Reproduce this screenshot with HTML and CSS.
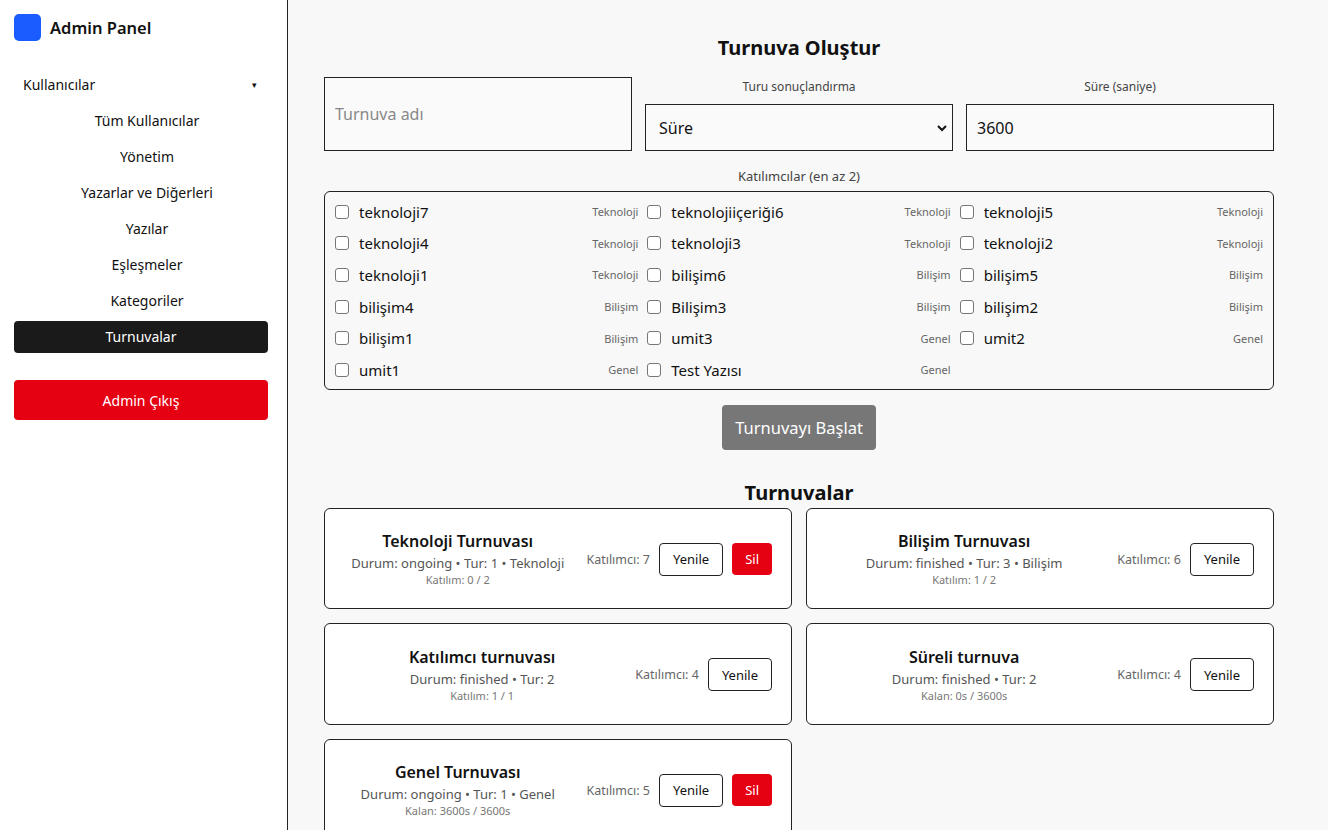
FILE: index.html
```html
<!doctype html>
<html lang="tr">
<head>
    <meta charset="utf-8">
    <meta name="viewport" content="width=device-width, initial-scale=1">
    <title>Admin Panel - Turnuvalar</title>
    <link rel="stylesheet" href="styles.css">
</head>
<body>
<div class="layout">
    <aside class="sidebar">
        <div class="brand">
            <span class="brand-logo"></span>
            <span class="brand-name">Admin Panel</span>
        </div>
        <nav class="nav">
            <div class="nav-group">Kullanıcılar <span class="caret">▾</span></div>
            <a class="nav-sub">Tüm Kullanıcılar</a>
            <a class="nav-sub">Yönetim</a>
            <a class="nav-sub">Yazarlar ve Diğerleri</a>
            <a class="nav-sub">Yazılar</a>
            <a class="nav-sub">Eşleşmeler</a>
            <a class="nav-sub">Kategoriler</a>
            <a class="nav-sub active">Turnuvalar</a>
        </nav>
        <button class="logout">Admin Çıkış</button>
    </aside>

    <main class="main">
        <h2 class="title">Turnuva Oluştur</h2>
        <div class="form-row">
            <div class="field field-name">
                <input type="text" placeholder="Turnuva adı">
            </div>
            <div class="field">
                <label>Turu sonuçlandırma</label>
                <div class="select-wrap">
                    <select>
                        <option>Süre</option>
                        <option>Katılım</option>
                    </select>
                    <svg class="chevron" width="10" height="7" viewBox="0 0 10 7"><polyline points="1,1 5,5 9,1" fill="none" stroke="#111" stroke-width="2"/></svg>
                </div>
            </div>
            <div class="field">
                <label>Süre (saniye)</label>
                <input type="text" value="3600">
            </div>
        </div>

        <div class="section-label">Katılımcılar (en az 2)</div>
        <div class="participants" id="participants"></div>

        <div class="start-row">
            <button class="start">Turnuvayı Başlat</button>
        </div>

        <h2 class="title title-list">Turnuvalar</h2>
        <div class="cards" id="cards"></div>
    </main>
</div>

<script>
    const participants = [
        ["teknoloji7", "Teknoloji"], ["teknolojiiçeriği6", "Teknoloji"], ["teknoloji5", "Teknoloji"],
        ["teknoloji4", "Teknoloji"], ["teknoloji3", "Teknoloji"], ["teknoloji2", "Teknoloji"],
        ["teknoloji1", "Teknoloji"], ["bilişim6", "Bilişim"], ["bilişim5", "Bilişim"],
        ["bilişim4", "Bilişim"], ["Bilişim3", "Bilişim"], ["bilişim2", "Bilişim"],
        ["bilişim1", "Bilişim"], ["umit3", "Genel"], ["umit2", "Genel"],
        ["umit1", "Genel"], ["Test Yazısı", "Genel"],
    ]

    const tournaments = [
        {name: "Teknoloji Turnuvası", meta: "Durum: ongoing • Tur: 1 • Teknoloji", sub: "Katılım: 0 / 2", count: 7, del: true},
        {name: "Bilişim Turnuvası", meta: "Durum: finished • Tur: 3 • Bilişim", sub: "Katılım: 1 / 2", count: 6, del: false},
        {name: "Katılımcı turnuvası", meta: "Durum: finished • Tur: 2", sub: "Katılım: 1 / 1", count: 4, del: false},
        {name: "Süreli turnuva", meta: "Durum: finished • Tur: 2", sub: "Kalan: 0s / 3600s", count: 4, del: false},
        {name: "Genel Turnuvası", meta: "Durum: ongoing • Tur: 1 • Genel", sub: "Kalan: 3600s / 3600s", count: 5, del: true},
    ]

    let list = document.getElementById("participants")
    for (let [name, cat] of participants) {
        let row = document.createElement("label")
        row.className = "participant"
        row.innerHTML = '<input type="checkbox"><span class="p-name">' + name + '</span><span class="p-cat">' + cat + '</span>'
        list.appendChild(row)
    }

    let cards = document.getElementById("cards")
    for (let t of tournaments) {
        let card = document.createElement("div")
        card.className = "card"
        card.innerHTML =
            '<div class="card-info">' +
                '<div class="card-title">' + t.name + '</div>' +
                '<div class="card-meta">' + t.meta + '</div>' +
                '<div class="card-sub">' + t.sub + '</div>' +
            '</div>' +
            '<div class="card-actions">' +
                '<span class="card-count">Katılımcı: ' + t.count + '</span>' +
                '<button class="btn-outline">Yenile</button>' +
                (t.del ? '<button class="btn-danger">Sil</button>' : '') +
            '</div>'
        cards.appendChild(card)
    }
</script>
</body>
</html>
```

FILE: styles.css
```css
html, body {
    margin: 0;
    min-height: 100%;
}
body {
    font-family: "Segoe UI", "Noto Sans", sans-serif;
    color: #111;
    background: #f8f8f8;
}
.layout {
    display: flex;
    min-height: 100vh;
}

/* sidebar */
.sidebar {
    width: 288px;
    flex-shrink: 0;
    box-sizing: border-box;
    padding: 14px 19px 14px 14px;
    background: #fff;
    border-right: 1px solid #222;
}
.brand {
    display: flex;
    align-items: center;
    gap: 9px;
    height: 27px;
}
.brand-logo {
    width: 27px;
    height: 27px;
    border-radius: 5px;
    background: #1a5cff;
}
.brand-name {
    font-size: 16.5px;
    font-weight: 600;
}
.nav {
    display: flex;
    flex-direction: column;
    gap: 4px;
    margin-top: 28px;
}
.nav-group {
    display: flex;
    justify-content: space-between;
    align-items: center;
    height: 31px;
    margin-bottom: 1px;
    padding: 0 11px 0 9px;
    font-size: 14px;
}
.caret {
    font-size: 9px;
}
.nav-sub {
    display: block;
    margin-left: 12px;
    height: 32px;
    line-height: 32px;
    text-align: center;
    font-size: 14px;
    border-radius: 4px;
    cursor: pointer;
}
.nav-sub.active {
    margin-left: 0;
    background: #1a1a1a;
    color: #fff;
}
.logout {
    display: block;
    width: 100%;
    height: 40px;
    margin-top: 27px;
    border: none;
    border-radius: 4px;
    background: #e50012;
    color: #fff;
    font-family: inherit;
    font-size: 14px;
}

/* main */
.main {
    flex: 1;
    padding: 33px 54px 40px 36px;
}
.title {
    margin: 0;
    font-size: 20px;
    line-height: 30px;
    font-weight: 700;
    text-align: center;
}
.form-row {
    display: grid;
    grid-template-columns: repeat(3, 1fr);
    gap: 13px;
    margin-top: 14px;
}
.field {
    display: flex;
    flex-direction: column;
}
.field label {
    font-size: 12px;
    color: #444;
    text-align: center;
    line-height: 20px;
    margin-bottom: 7px;
}
.field input, .field select {
    box-sizing: border-box;
    width: 100%;
    height: 47px;
    border: 1px solid #222;
    border-radius: 0;
    background: #fafafa;
    font-family: inherit;
    font-size: 16px;
    color: #111;
    padding: 0 10px;
    outline: none;
}
.field-name input {
    height: 74px;
}
.field input::placeholder {
    color: #888;
}
.select-wrap {
    position: relative;
}
.field select {
    appearance: none;
    padding-left: 13px;
}
.chevron {
    position: absolute;
    right: 6px;
    top: 21px;
    pointer-events: none;
}
.section-label {
    margin-top: 15px;
    text-align: center;
    font-size: 13px;
    line-height: 20px;
    color: #444;
}
.participants {
    display: grid;
    grid-template-columns: repeat(3, 1fr);
    grid-auto-rows: 31.6px;
    column-gap: 9px;
    margin-top: 5px;
    padding: 4px 10px 3px;
    border: 1px solid #222;
    border-radius: 6px;
}
.participant {
    display: flex;
    align-items: center;
    min-width: 0;
}
.participant input {
    appearance: none;
    width: 14px;
    height: 14px;
    margin: 0 10px 0 0;
    border: 1px solid #777;
    border-radius: 3px;
    background: #fff;
}
.p-name {
    flex: 1;
    font-size: 15px;
}
.p-cat {
    font-size: 11px;
    color: #666;
}
.start-row {
    display: flex;
    justify-content: center;
    margin-top: 15px;
}
.start {
    height: 45px;
    padding: 0 13px;
    border: none;
    border-radius: 4px;
    background: #777;
    color: #fff;
    font-family: inherit;
    font-size: 16.5px;
}
.title-list {
    margin-top: 28px;
}
.cards {
    display: grid;
    grid-template-columns: repeat(2, 1fr);
    grid-auto-rows: 101.5px;
    gap: 14px;
}
.card {
    display: flex;
    align-items: center;
    gap: 12px;
    padding: 2px 19px 0 16px;
    background: #fff;
    border: 1px solid #222;
    border-radius: 6px;
}
.card-info {
    flex: 1;
    text-align: center;
}
.card-title {
    font-size: 16px;
    font-weight: 600;
    line-height: 22px;
}
.card-meta {
    margin-top: 2px;
    font-size: 13px;
    line-height: 18px;
    color: #555;
}
.card-sub {
    font-size: 11px;
    line-height: 16px;
    color: #777;
}
.card-actions {
    display: flex;
    align-items: center;
    gap: 9px;
}
.card-count {
    font-size: 12.5px;
    color: #666;
}
.btn-outline {
    height: 33px;
    padding: 0 13px;
    border: 1px solid #222;
    border-radius: 4px;
    background: #fff;
    font-family: inherit;
    font-size: 13px;
    color: #111;
}
.btn-danger {
    height: 32px;
    padding: 0 13px;
    border: none;
    border-radius: 4px;
    background: #e50012;
    color: #fff;
    font-family: inherit;
    font-size: 13px;
}
```
